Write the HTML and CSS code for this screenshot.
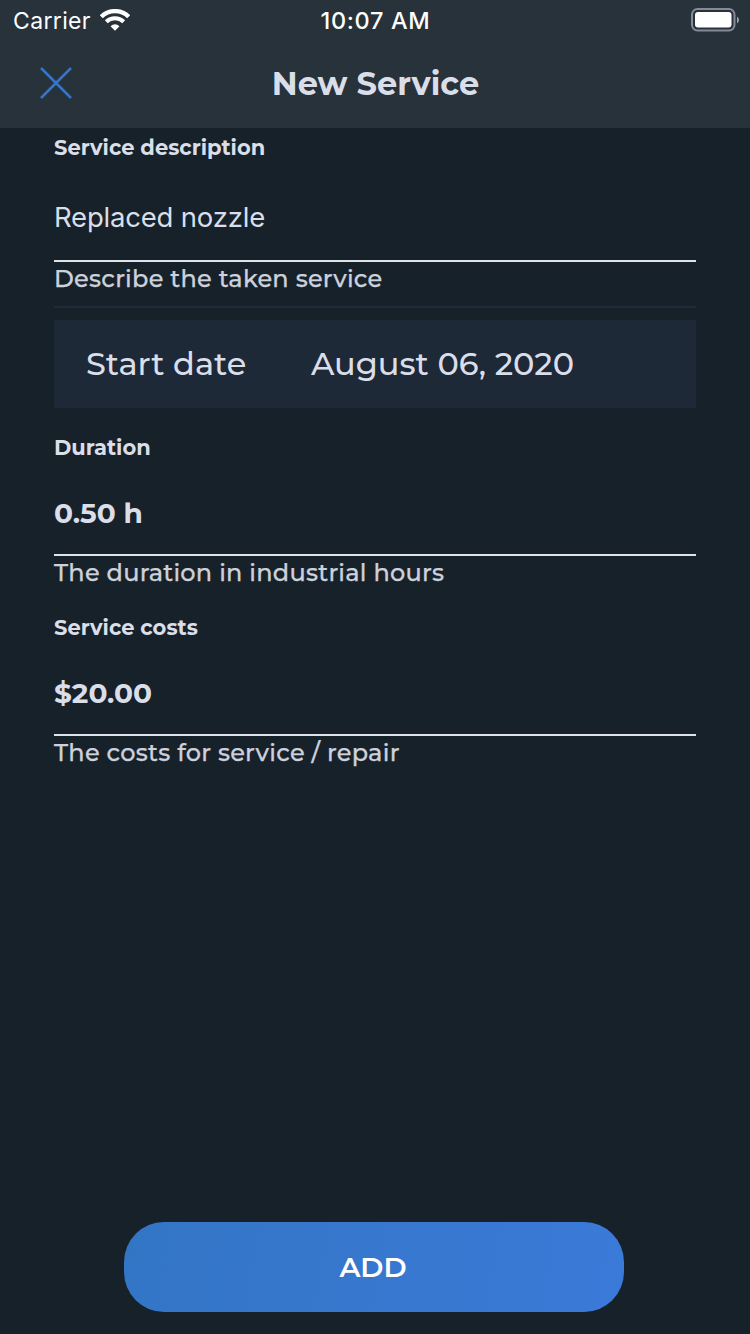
FILE: index.html
```
<!DOCTYPE html>
<html lang="en">
<head>
<meta charset="utf-8">
<title>New Service</title>
<link rel="stylesheet" href="styles.css">
</head>
<body>
<div class="screen">
  <header class="header">
    <div class="status">
      <div class="status-left"><span class="carrier">Carrier</span>
        <svg class="wifi" width="30" height="23" viewBox="0 0 30 23" fill="none" stroke="#fff"><path d="M1.3 7.8 A19.4 19.4 0 0 1 28.7 7.8" stroke-width="4.4"/><path d="M6.3 12.8 A12.4 12.4 0 0 1 23.7 12.8" stroke-width="4"/><path d="M10.5 17.2 Q15 13.4 19.5 17.2 L15 21.8Z" fill="#fff" stroke="none"/></svg>
      </div>
      <span class="clock">10:07 AM</span>
      <svg class="battery" width="50" height="26" viewBox="0 0 50 26"><rect x="2" y="2" width="42.5" height="21.5" rx="5.5" fill="none" stroke="#868a96" stroke-width="2"/><rect x="5" y="5" width="36.5" height="15.5" rx="3" fill="#fff"/><path d="M47 9.5 Q49 10.5 49 13 T47 16.5Z" fill="#9ea2ab"/></svg>
    </div>
    <nav class="nav">
      <svg class="close" width="34" height="34" viewBox="0 0 34 34" fill="none" stroke="#3576ca" stroke-width="2.5"><path d="M2 2 L32 32 M32 2 L2 32"/></svg>
      <h1 class="title">New Service</h1>
    </nav>
  </header>
  <main class="form">
    <section class="field field-text">
      <div class="label">Service description</div>
      <div class="value input">Replaced nozzle</div>
      <div class="helper">Describe the taken service</div>
    </section>
    <div class="date-row"><span>Start date</span><span>August 06, 2020</span></div>
    <section class="field">
      <div class="label">Duration</div>
      <div class="value">0.50 h</div>
      <div class="helper">The duration in industrial hours</div>
    </section>
    <section class="field">
      <div class="label">Service costs</div>
      <div class="value">$20.00</div>
      <div class="helper">The costs for service / repair</div>
    </section>
  </main>
  <footer class="footer"><button class="add">ADD</button></footer>
</div>
</body>
</html>
```
FILE: styles.css
```
* { box-sizing: border-box; margin: 0; }
body { background: #17212a; font-family: Montserrat, Inter, sans-serif; color: #dadee8; }
.screen { width: 750px; height: 1334px; display: flex; flex-direction: column; white-space: nowrap; }
.header { height: 128px; background: #27323a; }
.status { height: 40px; display: grid; grid-template-columns: 1fr auto 1fr; grid-template-rows: 40px; align-items: center; padding: 0 10px 0 13px; color: #fff; font-family: Inter, sans-serif; }
.status-left { display: flex; align-items: center; gap: 9px; }
.carrier { font-size: 23px; line-height: 38px; letter-spacing: 0.35px; padding-top: 2px; }
.clock { font-size: 23.5px; font-weight: 500; line-height: 38px; letter-spacing: 0.65px; padding: 2px 2px 0 0; }
.battery { justify-self: end; }
.nav { height: 88px; display: grid; grid-template-columns: 121px 1fr 120px; align-items: center; }
.close { margin: 0 0 2px 39px; }
.title { font-size: 32px; font-weight: 700; line-height: 88px; text-align: center; }
.form { flex: 1; padding: 0 54px; }
.field { padding-bottom: 18px; }
.label { font-size: 21px; font-weight: 700; line-height: 38px; height: 38px; padding-top: 1px; }
.value { height: 90px; padding-top: 6px; font-size: 28px; font-weight: 700; line-height: 83px; border-bottom: 2px solid #dfe4ec; }
.input { height: 96px; padding-top: 8px; font-family: Inter, sans-serif; font-size: 27.5px; font-weight: 400; line-height: 86px; letter-spacing: -0.2px; }
.helper { height: 34px; font-size: 24px; font-weight: 500; line-height: 34px; color: #cdd1dc; letter-spacing: 0.24px; -webkit-text-stroke: 0.25px currentColor; }
.field-text { height: 180px; padding: 0; border-bottom: 2px solid #1f2b3b; }
.date-row { height: 88px; margin: 12px 0 20px; padding-left: 32px; display: grid; grid-template-columns: 225px 1fr; align-items: center; background: #1e2938; font-size: 32px; font-weight: 500; line-height: 88px; }
.footer { height: 112px; display: flex; padding-left: 124px; align-items: flex-start; }
.add { width: 500px; height: 90px; border: 0; border-radius: 40px; background: linear-gradient(100deg, #3375c5, #3b7ad8); color: #fff; font: 600 28px/90px Montserrat, Inter, sans-serif; padding: 0 2px 0 0; }
```
